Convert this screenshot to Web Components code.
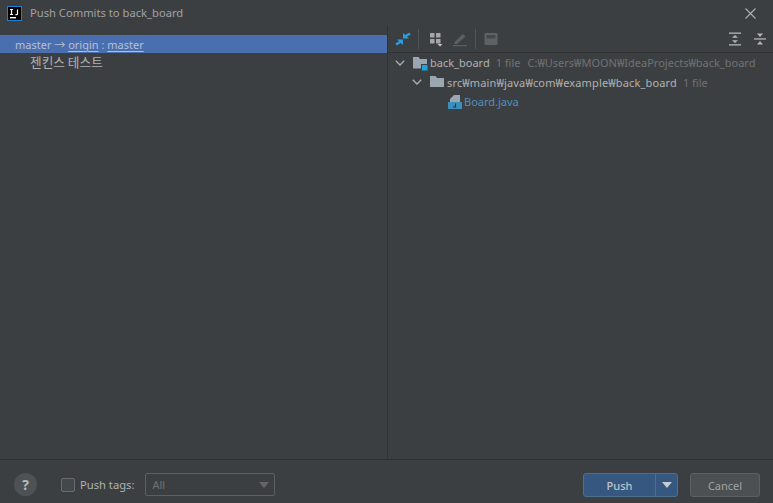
<!DOCTYPE html>
<html>
<head>
<meta charset="utf-8">
<style>
html, body { margin: 0; padding: 0; height: 100%; background: #3c3f41; }
body { font: 11px "Noto Sans", "Noto Sans CJK KR", sans-serif; color: #b0b2b4; overflow: hidden; }
</style>
</head>
<body>
<push-dialog>
    <dialog-title slot="title">Push Commits to back_board</dialog-title>
    <commit-list slot="left"></commit-list>
    <change-tree slot="right"></change-tree>
    <dialog-footer slot="footer"></dialog-footer>
</push-dialog>

<script>
class PushDialog extends HTMLElement {
    constructor() {
        super();
        this.attachShadow({ mode: "open" });
        this.shadowRoot.innerHTML = `
            <style>
            :host { display: flex; flex-direction: column; height: 503px; width: 773px; }
            .main { flex: 1; display: flex; min-height: 0; }
            .left { width: 387px; border-right: 1px solid #323232; }
            .right { flex: 1; min-width: 0; }
            </style>
            <slot name="title"></slot>
            <div class="main">
                <div class="left"><slot name="left"></slot></div>
                <div class="right"><slot name="right"></slot></div>
            </div>
            <slot name="footer"></slot>
        `;
    }
}

class DialogTitle extends HTMLElement {
    constructor() {
        super();
        this.attachShadow({ mode: "open" });
        this.shadowRoot.innerHTML = `
            <style>
            :host { display: flex; align-items: center; height: 26px; padding: 0 17px 0 7px; color: #a0a2a4; font-size: 11.200px; }
            svg.logo { margin-right: 8px; }
            .text { flex: 1; padding-bottom: 1px; }
            </style>
            <svg class="logo" width="15" height="15" viewBox="0 0 15 15">
                <rect x="0.5" y="0.5" width="14" height="14" fill="#000" stroke="#1f7fd0"/>
                <rect x="3" y="11" width="6" height="1.400" fill="#fff"/>
                <path d="M3 3.500h3M4.500 3.500v5M3 8.500h3M10.500 3.500v4.200q0 1-1.100 1h-1" fill="none" stroke="#fff" stroke-width="1.200"/>
            </svg>
            <span class="text"><slot></slot></span>
            <svg width="11" height="11" viewBox="0 0 11 11"><path d="M.5.500l10 10M10.500.500l-10 10" stroke="#aeb0b2" stroke-width="1.100" fill="none"/></svg>
        `;
    }
}

class CommitList extends HTMLElement {
    constructor() {
        super();
        this.attachShadow({ mode: "open" });
        this.shadowRoot.innerHTML = `
            <style>
            :host { display: block; padding-top: 9px; }
            .sel { height: 18px; line-height: 19px; background: #4b6eaf; padding-left: 15px; color: #b3c0d8; white-space: pre; }
            .sel u { text-underline-offset: 2px; }
            .row { height: 18px; line-height: 17px; padding-left: 30px; color: #b0b2b4; font-size: 12.700px; font-family: "Noto Sans CJK KR", sans-serif; }
            </style>
            <div class="sel">master → <u>origin</u> : <u>master</u></div>
            <div class="row">젠킨스 테스트</div>
        `;
    }
}

class ChangeTree extends HTMLElement {
    constructor() {
        super();
        this.attachShadow({ mode: "open" });
        this.shadowRoot.innerHTML = `
            <style>
            :host { display: block; }
            .toolbar { display: flex; align-items: center; height: 26px; border-bottom: 1px solid #323232; padding: 0 6px 0 7px; }
            .sep { width: 1px; height: 20px; background: #515456; flex: none; }
            .spring { flex: 1; }
            svg { display: block; flex: none; }
            .tree { white-space: nowrap; }
            .node { display: flex; align-items: center; height: 19.500px; }
            .chev { width: 18px; flex: none; display: flex; justify-content: center; }
            .hint { color: #707274; margin-left: 6px; }
            .path { color: #707274; margin-left: 7px; }
            .src { letter-spacing: .15px; }
            .blue { color: #4f8fba; }
            </style>
            <div class="toolbar">
                <svg width="16" height="16" viewBox="0 0 16 16" fill="#2f9be0">
                    <path d="M8 2l6 5.500H8z"/><path d="M10 5.500l5-3" stroke="#2f9be0" stroke-width="2.400"/>
                    <path d="M8 14l-6-5.500h6z"/><path d="M6 10.500l-5 3" stroke="#2f9be0" stroke-width="2.400"/>
                </svg>
                <span class="sep" style="margin:0 10px 0 7px"></span>
                <svg width="14" height="16" viewBox="0 0 14 16" fill="#a4a6a8">
                    <rect x="1" y="2" width="4.500" height="4.500" rx=".5"/><rect x="7" y="2" width="4.500" height="4.500" rx=".5"/>
                    <rect x="1" y="8" width="4.500" height="4.500" rx=".5"/><rect x="7" y="8" width="4.500" height="4.500" rx=".5"/>
                    <path d="M8.500 13h5l-2.500 2.500z" fill="#c4c6c8"/>
                </svg>
                <svg style="margin-left:9px" width="16" height="16" viewBox="0 0 16 16">
                    <path d="M2.500 11l8.500-8 2.500 2.500-8.500 7.500h-2.500z" fill="#5c5f61"/><rect x="1" y="14" width="14" height="1.300" fill="#5c5f61"/>
                </svg>
                <span class="sep" style="margin:0 8px 0 7px"></span>
                <svg width="14" height="14" viewBox="0 0 14 14"><rect x="0.500" y="1" width="13" height="12" rx="1" fill="#5f6264"/><rect x="2.500" y="3" width="9" height="3.500" fill="#45484a"/></svg>
                <span class="spring"></span>
                <svg width="14" height="14" viewBox="0 0 14 14" fill="#b4b6b8">
                    <rect x="1" y="0.500" width="12" height="1.300"/><rect x="1" y="12.200" width="12" height="1.300"/>
                    <path d="M7 3l3 2.800H4zM7 11l3-2.800H4z"/>
                </svg>
                <svg style="margin-left:11px" width="14" height="14" viewBox="0 0 14 14" fill="#b4b6b8">
                    <rect x="1" y="6.300" width="12" height="1.300"/>
                    <path d="M7 5L4 1.500h6zM7 9l3 3.500H4z"/>
                </svg>
            </div>
            <div class="tree">
                <div class="node" style="padding-left:3px">
                    <span class="chev"><svg width="10" height="6" viewBox="0 0 10 6"><path d="M.8.800L5 5l4.200-4.200" fill="none" stroke="#aeb0b2" stroke-width="1.300"/></svg></span>
                    <svg style="margin:0 2px 0 3px" width="16" height="16" viewBox="0 0 16 16">
                        <path d="M1 2h5.500l1.500 2h7v9.500H1z" fill="#9aa7b0"/>
                        <rect x="9" y="9" width="6.500" height="6.500" fill="#3c3f41"/><rect x="10" y="10" width="5.500" height="5.500" fill="#1ea3dc"/>
                    </svg>
                    <span>back_board</span><span class="hint">1 file</span><span class="path">C:₩Users₩MOON₩IdeaProjects₩back_board</span>
                </div>
                <div class="node" style="padding-left:20px">
                    <span class="chev"><svg width="10" height="6" viewBox="0 0 10 6"><path d="M.8.800L5 5l4.200-4.200" fill="none" stroke="#aeb0b2" stroke-width="1.300"/></svg></span>
                    <svg style="margin:0 2px 0 3px" width="16" height="16" viewBox="0 0 16 16"><path d="M1 2h5.500l1.500 2h7v9H1z" fill="#9aa7b0"/></svg>
                    <span class="src">src₩main₩java₩com₩example₩back_board</span><span class="hint">1 file</span>
                </div>
                <div class="node" style="padding-left:59px">
                    <svg style="margin-right:1px" width="16" height="16" viewBox="0 0 16 16">
                        <path d="M7 1h6v7H3V5z" fill="#9aa7b0"/>
                        <rect x="1" y="8" width="14" height="7" fill="#3a8fbd"/>
                        <path d="M8.500 9.500v3.500H6" fill="none" stroke="#23323d" stroke-width="1.200"/>
                    </svg>
                    <span class="blue">Board.java</span>
                </div>
            </div>
        `;
    }
}

class DialogFooter extends HTMLElement {
    constructor() {
        super();
        this.attachShadow({ mode: "open" });
        this.shadowRoot.innerHTML = `
            <style>
            :host { display: flex; align-items: center; height: 25px; border-top: 1px solid #323232; padding: 12px 13px 6px 14px; }
            .help { width: 23px; height: 23px; border-radius: 50%; background: #4e5254; color: #bbb; font-weight: 700; font-size: 14px; display: flex; align-items: center; justify-content: center; margin-right: 24px; }
            .check { width: 12px; height: 12px; border: 1px solid #6b6b6b; border-radius: 2px; background: #43494a; margin-right: 5px; }
            .lbl { margin-right: 11px; font-size: 11.200px; }
            .combo { width: 116px; height: 21px; border: 1px solid #5e6060; border-radius: 2px; display: flex; align-items: center; justify-content: space-between; padding: 0 6px; color: #707274; }
            .tri { width: 0; height: 0; border: 5px solid transparent; border-top: 6px solid #666; border-bottom: 0; margin-right: -1px; }
            .spring { flex: 1; }
            .push { display: flex; width: 93px; height: 22px; border: 1px solid #4c708c; border-radius: 3px; background: #365880; color: #bbc6d0; font-weight: 500; }
            .push b { flex: 1; font-weight: 500; text-align: center; line-height: 23px; }
            .arrow { width: 21px; border-left: 1px solid #4c708c; display: flex; align-items: center; justify-content: center; }
            .arrow i { width: 0; height: 0; border: 5px solid transparent; border-top: 6px solid #c4ccd4; border-bottom: 0; }
            .cancel { width: 68px; height: 22px; line-height: 23px; margin-left: 12px; text-align: center; border: 1px solid #5e6060; border-radius: 3px; background: #4c5052; color: #a0a2a4; }
            </style>
            <span class="help">?</span>
            <span class="check"></span>
            <span class="lbl">Push tags:</span>
            <span class="combo"><span>All</span><span class="tri"></span></span>
            <span class="spring"></span>
            <span class="push"><b>Push</b><span class="arrow"><i></i></span></span>
            <span class="cancel">Cancel</span>
        `;
    }
}

customElements.define("push-dialog", PushDialog);
customElements.define("dialog-title", DialogTitle);
customElements.define("commit-list", CommitList);
customElements.define("change-tree", ChangeTree);
customElements.define("dialog-footer", DialogFooter);
</script>
</body>
</html>
